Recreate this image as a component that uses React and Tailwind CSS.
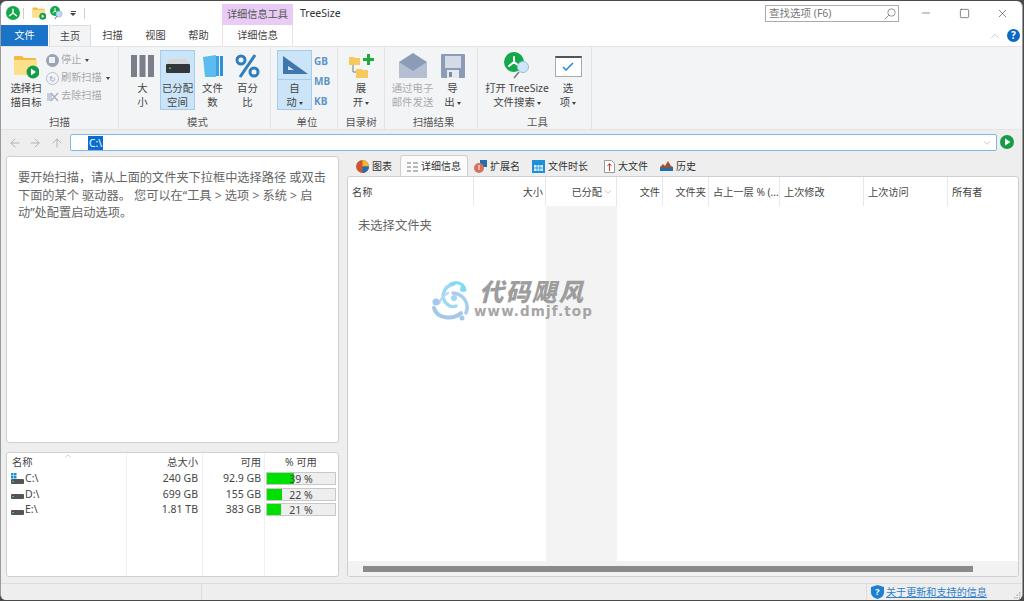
import { ArrowLeft, ArrowRight, ArrowUp, ChevronDown, ChevronUp, Minus, Square, X } from 'lucide-react'

function Logo({ size = 16 }) {
  return (
    <svg width={size} height={size} viewBox="0 0 20 20" className="shrink-0">
      <circle cx="10" cy="10" r="10" fill="#12a84b" />
      <path d="M10 4.5V10L5 14M10 10l5 4" fill="none" stroke="#fff" strokeWidth="2" strokeLinecap="round" />
    </svg>
  )
}

function PlayBadge({ size = 14 }) {
  return (
    <svg width={size} height={size} viewBox="0 0 14 14" className="shrink-0">
      <circle cx="7" cy="7" r="7" fill="#169c46" />
      <path d="M5 3.5v7L10.5 7z" fill="#fff" />
    </svg>
  )
}

function FolderPlay({ w = 26, h = 26 }) {
  return (
    <svg width={w} height={h} viewBox="0 0 26 26">
      <path d="M1 4a1 1 0 0 1 1-1h7l2 2h12v16H1z" fill="#f5b942" />
      <path d="M1 7h23v15H1z" fill="#fde08a" />
      <circle cx="20" cy="19" r="6.5" fill="#169c46" />
      <path d="M18 15.5v7l5-3.5z" fill="#fff" />
    </svg>
  )
}

function Caret() {
  return <span className="ml-[2px] inline-block align-middle w-0 h-0 border-x-[2.5px] border-x-transparent border-t-[3px] border-t-[#444]" />
}

function BigButton({ icon, lines, active, muted, caret, className = 'w-[35px]' }) {
  return (
    <div className={`${className} h-[60px] shrink-0 flex flex-col items-center border ${active ? 'bg-[#cce4f7] border-[#a3cdee]' : 'border-transparent'}`}>
      <div className="h-[31px] flex items-center justify-center">{icon}</div>
      <div className={`text-[10.4px] leading-[14px] text-center whitespace-nowrap ${muted ? 'text-[#aaaaaa]' : 'text-[#444]'}`}>
        {lines.map((l, i) => (
          <div key={i}>{l}{caret && i === lines.length - 1 && <Caret />}</div>
        ))}
      </div>
    </div>
  )
}

function Group({ label, className, children }) {
  return (
    <div className={`${className} h-full flex flex-col border-r border-[#e2e3e5] shrink-0`}>
      <div className="h-[60px] mt-[3px] flex">{children}</div>
      <div className="mt-[5px] h-[14px] leading-[14px] text-[10.4px] text-[#555] text-center">{label}</div>
    </div>
  )
}

function SmallAction({ icon, label, caret }) {
  return (
    <div className="h-[18px] flex items-center gap-[2px] text-[10.2px] text-[#aaaaaa] whitespace-nowrap">
      <span className="w-[14px] flex justify-center">{icon}</span>
      {label}
      {caret && <Caret />}
    </div>
  )
}

function Tab({ icon, label, active }) {
  return (
    <div className={`h-[21px] flex items-center gap-[3px] text-[10px] text-[#333] px-[6px] pt-px ${active ? 'bg-[#fbfbfb] border border-b-0 border-[#cfcfcf] rounded-t-[3px]' : ''}`}>
      {icon}
      <span>{label}</span>
    </div>
  )
}

const columns = [
  ['名称', 'w-[126px] pl-[4px] text-left'],
  ['大小', 'w-[72px] pr-[2px] text-right'],
  ['已分配', 'w-[71px] pr-[14px] text-right'],
  ['文件', 'w-[46px] pr-[2px] text-right'],
  ['文件夹', 'w-[46px] pr-[2px] text-right'],
  ['占上一层 % (...', 'w-[71px] pl-[4px] text-left'],
  ['上次修改', 'w-[84px] pl-[4px] text-left'],
  ['上次访问', 'w-[84px] pl-[4px] text-left'],
  ['所有者', 'flex-1 pl-[4px] text-left'],
]

const drives = [
  { name: 'C:\\', total: '240 GB', free: '92.9 GB', pct: 39, win: true },
  { name: 'D:\\', total: '699 GB', free: '155 GB', pct: 22 },
  { name: 'E:\\', total: '1.81 TB', free: '383 GB', pct: 21 },
]

function DriveIcon({ win }) {
  return (
    <svg width="13" height="12" viewBox="0 0 13 12" className="shrink-0">
      {win && <path d="M0 0h2.5v2.500H0zM3 0h2.500v2.500H3zM0 3h2.500v2.500H0zM3 3h2.500v2.500H3z" fill="#1c8fdc" />}
      <rect x="0" y="6" width="13" height="5" rx="1" fill="#555" />
      <rect x="1" y="8" width="2" height="1" fill="#4bd04b" />
    </svg>
  )
}

export default function App() {
  return (
    <div className="w-[1024px] h-[601px] bg-[#4a4a4a] overflow-hidden font-['Noto_Sans','Noto_Sans_CJK_SC',sans-serif]">
      <div className="w-[1023px] h-[599px] mt-[1px] bg-white rounded-[6px] border-l border-r border-[#9a9a9a] overflow-hidden flex flex-col">
        {/* title row */}
        <div className="h-[24px] flex shrink-0 relative">
          <div className="w-[221px] flex items-center pl-[5px] shrink-0">
            <Logo size={14} />
            <div className="w-px h-[11px] bg-[#ccc] ml-[3px]" />
            <div className="ml-[8px]"><FolderPlay w={14} h={14} /></div>
            <svg width="16" height="16" viewBox="0 0 16 16" className="ml-[3px]">
              <circle cx="6" cy="6" r="5" fill="#12a84b" />
              <path d="M6 3v3L3.500 8M6 6l2.500 2" fill="none" stroke="#fff" strokeWidth="1" />
              <circle cx="10" cy="9" r="3" fill="#bcdcf5" stroke="#8fb6d8" strokeWidth="0.7" />
              <path d="M8 11l-2 3" stroke="#777" strokeWidth="1" />
            </svg>
            <span className="ml-[5px] w-[6px] flex flex-col items-center gap-[1px]">
              <span className="block w-[5px] h-px bg-[#444]" />
              <span className="block w-0 h-0 border-x-[3px] border-x-transparent border-t-[3px] border-t-[#444]" />
            </span>
            <div className="w-px h-[11px] bg-[#ccc] ml-[8px]" />
          </div>
          <div className="mt-[3px] w-[71px] h-[21px] bg-[#e8ccf5] text-[10.2px] leading-[21px] text-center text-[#555] shrink-0">详细信息工具</div>
          <div className="ml-[7px] pt-[5px] text-[10.5px] leading-[14px] text-[#333]">TreeSize</div>
          <div className="ml-auto flex items-center pr-[13px]">
            <div className="w-[134px] h-[17px] mt-[1px] border border-[#aaa] flex items-center justify-between pl-[3px] pr-[2px] text-[10.5px] text-[#777]">
              查找选项 (F6)
              <svg width="12" height="12" viewBox="0 0 12 12" fill="none" stroke="#888" strokeWidth="0.9">
                <circle cx="7.500" cy="4.500" r="3.700" />
                <path d="M4.800 7.200L0.800 11.200" />
              </svg>
            </div>
            <Minus size={12} strokeWidth={1} className="ml-[21px] text-[#222]" />
            <Square size={11} strokeWidth={1.2} className="ml-[27px] text-[#222]" />
            <X size={13} strokeWidth={1} className="ml-[26px] text-[#222]" />
          </div>
        </div>

        {/* tab row */}
        <div className="h-[21px] flex items-stretch shrink-0 text-[10.2px] text-[#444] leading-[21px]">
          <div className="w-[47px] bg-[#1a73c6] text-white text-center">文件</div>
          <div className="w-[42px] ml-px bg-[#f3f4f6] border-x border-t border-[#dcdcdc] text-center">主页</div>
          <div className="ml-[11px] w-[21px] text-center">扫描</div>
          <div className="ml-[22px] w-[21px] text-center">视图</div>
          <div className="ml-[22px] w-[21px] text-center">帮助</div>
          <div className="ml-[13px] w-[71px] border-x border-[#e3e3e3] text-center">详细信息</div>
          <div className="ml-auto flex items-center gap-[5px] pr-[2px]">
            <ChevronUp size={14} strokeWidth={1} className="text-[#aaa]" />
            <span className="w-[13px] h-[13px] rounded-full bg-[#0b68c4] text-white text-[10px] leading-[13px] font-bold text-center">?</span>
          </div>
        </div>

        {/* ribbon */}
        <div className="h-[83px] shrink-0 bg-[#f3f4f6] border-t border-[#e4e4e4] flex">
          <Group label="扫描" className="w-[118px]">
            <BigButton
              className="ml-[7px] w-[36px]"
              icon={<FolderPlay />}
              lines={['选择扫', '描目标']}
            />
            <div className="ml-[1px] flex flex-col pt-px">
              <SmallAction label="停止" caret icon={<span className="w-[13px] h-[13px] rounded-full bg-[#9ca3b4] flex items-center justify-center"><span className="block w-[6px] h-[6px] bg-[#eef0f4]" /></span>} />
              <SmallAction label="刷新扫描" caret icon={<span className="w-[13px] h-[13px] rounded-full border border-[#b5bfce] text-[8px] leading-[11px] text-center text-[#8fa3c0]">↻</span>} />
              <SmallAction label="去除扫描" icon={
                <svg width="13" height="13" viewBox="0 0 13 13"><path d="M1 3h5v8H1z" fill="#c4cede" /><path d="M5 3l7 8M12 3l-7 8" stroke="#a8adb8" strokeWidth="1.2" /></svg>
              } />
            </div>
          </Group>

          <Group label="模式" className="w-[152px] pl-[6px]">
            <BigButton
              lines={['大', '小']}
              icon={
                <svg width="23" height="22" viewBox="0 0 23 22">
                  <rect x="0" y="0" width="6" height="22" fill="#7b7f8a" />
                  <rect x="8.500" y="0" width="6" height="22" fill="#7b7f8a" />
                  <rect x="17" y="0" width="6" height="22" fill="#7b7f8a" />
                </svg>
              }
            />
            <BigButton
              active
              lines={['已分配', '空间']}
              icon={
                <svg width="24" height="14" viewBox="0 0 24 14">
                  <path d="M4 0h16l4 5H0z" fill="#d5d7da" />
                  <rect x="0" y="5" width="24" height="9" rx="1" fill="#33363a" />
                  <rect x="3" y="8.500" width="2" height="1.500" fill="#35d04a" />
                </svg>
              }
            />
            <BigButton
              lines={['文件', '数']}
              icon={
                <svg width="20" height="22" viewBox="0 0 20 22">
                  <path d="M0 2l13-2v22H2z" fill="#5bbcf0" />
                  <rect x="13" y="1" width="3" height="20" fill="#3f9fe2" />
                  <rect x="17" y="1" width="3" height="20" fill="#2f8fd8" />
                </svg>
              }
            />
            <BigButton
              lines={['百分', '比']}
              icon={
                <svg width="25" height="24" viewBox="0 0 25 24" fill="none" stroke="#2f7ebd" strokeWidth="3">
                  <circle cx="6" cy="6" r="4" />
                  <circle cx="19" cy="18" r="4" />
                  <path d="M20 1L5 23" />
                </svg>
              }
            />
          </Group>

          <Group label="单位" className="w-[67px] pl-[6px]">
            <div className="w-[35px] h-[60px] bg-[#cce4f7] border border-[#a3cdee] flex flex-col items-center shrink-0">
              <div className="h-[29px] w-full flex items-center justify-center border-b border-[#a3cdee]">
                <svg width="26" height="18" viewBox="0 0 26 18">
                  <path d="M1 0l25 18H1zM6 10v4h6z" fill="#3f76ad" fillRule="evenodd" />
                </svg>
              </div>
              <div className="text-[10.4px] leading-[14px] text-center text-[#444] pt-[1px]">
                <div>自</div>
                <div>动<Caret /></div>
              </div>
            </div>
            <div className="ml-[2px] flex flex-col pt-[1px] text-[10px] leading-[20px] font-bold text-[#5b94c9]">
              <span>GB</span>
              <span>MB</span>
              <span>KB</span>
            </div>
          </Group>

          <Group label="目录树" className="w-[47px]">
            <BigButton
              className="w-full"
              caret
              lines={['展', '开']}
              icon={
                <svg width="26" height="25" viewBox="0 0 26 25">
                  <path d="M1 3h5l1 1h5v7H1z" fill="#f6c95c" />
                  <path d="M5 11v7h3" fill="none" stroke="#777" strokeWidth="1" />
                  <path d="M8 15h6l1 1h5v8H8z" fill="#f6c95c" />
                  <path d="M15 4h4V0h3v4h4v3h-4v4h-3V7h-4z" fill="#22a83d" />
                </svg>
              }
            />
          </Group>

          <Group label="扫描结果" className="w-[93px] pl-[5px]">
            <BigButton
              className="w-[45px]"
              muted
              lines={['通过电子', '邮件发送']}
              icon={
                <svg width="28" height="26" viewBox="0 0 28 26">
                  <path d="M0 9L14 0l14 9v16H0z" fill="#8d9cb6" />
                  <path d="M0 9l14 9 14-9v16H0z" fill="#b4bfd2" />
                </svg>
              }
            />
            <BigButton
              className="w-[35px]"
              caret
              lines={['导', '出']}
              icon={
                <svg width="24" height="24" viewBox="0 0 24 24">
                  <rect width="24" height="24" rx="1" fill="#8d9cb6" />
                  <rect x="4" y="2" width="16" height="12" fill="#d5dbe6" />
                  <rect x="6" y="16" width="12" height="8" fill="#e4e8ef" />
                  <rect x="8" y="18" width="3" height="5" fill="#7d8ca8" />
                </svg>
              }
            />
          </Group>

          <Group label="工具" className="w-[114px] pl-[6px]">
            <BigButton
              className="w-[66px]"
              caret
              lines={['打开 TreeSize', '文件搜索']}
              icon={
                <svg width="28" height="28" viewBox="0 0 28 28">
                  <circle cx="11" cy="10" r="10" fill="#12a84b" />
                  <path d="M11 5v5L6 14M11 10l5 4" fill="none" stroke="#fff" strokeWidth="2" strokeLinecap="round" />
                  <circle cx="20" cy="15" r="5.500" fill="#cfe6f8" stroke="#97bedd" />
                  <path d="M16 20l-5 6" stroke="#777" strokeWidth="1.500" />
                </svg>
              }
            />
            <BigButton
              className="w-[36px]"
              caret
              lines={['选', '项']}
              icon={
                <span className="w-[27px] h-[21px] bg-white border border-[#a9a9a9] border-t-2 border-t-[#555] flex items-center justify-center">
                  <svg width="12" height="9" viewBox="0 0 12 9"><path d="M1 5l3 3 7-7" fill="none" stroke="#1e88e5" strokeWidth="1.500" /></svg>
                </span>
              }
            />
          </Group>
        </div>

        {/* address bar */}
        <div className="h-[26px] shrink-0 bg-[#eeeeee] border-t border-[#e4e4e4] flex items-start pt-[4px] text-[#aaa]">
          <ArrowLeft size={14} strokeWidth={1.5} className="ml-[7px] mt-[2px]" />
          <ArrowRight size={14} strokeWidth={1.5} className="ml-[6px] mt-[2px]" />
          <ArrowUp size={14} strokeWidth={1.5} className="ml-[8px] mt-[2px]" />
          <div className="ml-[6px] w-[927px] h-[17px] bg-white border border-[#7db8e8] rounded-[2px] flex items-center pl-[17px] pr-[4px]">
            <span className="bg-[#0a6ccf] text-white text-[10.2px] leading-[14px] px-px">C:\</span>
            <ChevronDown size={10} strokeWidth={1} className="ml-auto text-[#777]" />
          </div>
          <div className="ml-[3px] mt-[1px]"><PlayBadge /></div>
        </div>

        {/* main */}
        <div className="flex-1 min-h-0 bg-[#eeeeee] flex pl-[5px] pr-[3px]">
          <div className="w-[333px] flex flex-col shrink-0 pt-[1px] pb-[6px]">
            <div className="h-[287px] bg-white border border-[#cfcfcf] rounded-[3px] pl-[11px] pr-[9px] pt-[12px] text-[12.2px] leading-[17.500px] text-[#666]">
              要开始扫描，请从上面的文件夹下拉框中选择路径 或双击下面的某个 驱动器。 您可以在“工具 &gt; 选项 &gt; 系统 &gt; 启动”处配置启动选项。
            </div>
            <div className="mt-[9px] flex-1 bg-white border border-[#cfcfcf] rounded-[3px] relative text-[10.3px] text-[#444]">
              <ChevronUp size={10} strokeWidth={1} className="absolute left-[56px] top-[-2px] text-[#888]" />
              <div className="h-full flex">
                <div className="w-[120px] border-r border-[#eef0f2] pl-[4px]">
                  <div className="h-[18px] leading-[19px] pl-px">名称</div>
                  {drives.map(d => (
                    <div key={d.name} className="h-[15.500px] flex items-center gap-[1px] leading-[15px] text-[10.5px]">
                      <DriveIcon win={d.win} />
                      {d.name}
                    </div>
                  ))}
                </div>
                <div className="w-[76px] border-r border-[#eef0f2] text-right pr-[4px]">
                  <div className="h-[18px] leading-[19px]">总大小</div>
                  {drives.map(d => <div key={d.name} className="h-[15.500px] leading-[15px] text-[10.5px]">{d.total}</div>)}
                </div>
                <div className="w-[62px] border-r border-[#eef0f2] text-right pr-[3px]">
                  <div className="h-[18px] leading-[19px]">可用</div>
                  {drives.map(d => <div key={d.name} className="h-[15.500px] leading-[15px] text-[10.5px]">{d.free}</div>)}
                </div>
                <div className="flex-1 pl-[1px] pr-[2px]">
                  <div className="h-[18px] leading-[19px] text-center">% 可用</div>
                  {drives.map(d => (
                    <div key={d.name} className="h-[15.500px] flex items-center">
                      <div className="relative w-full h-[13px] bg-[#eeeeee] border border-[#c8c8c8] text-center text-[10.5px] leading-[12px]">
                        <div className="absolute left-0 top-0 bottom-0 bg-[#00e000]" style={{ width: `${d.pct}%` }} />
                        <span className="relative">{d.pct} %</span>
                      </div>
                    </div>
                  ))}
                </div>
              </div>
            </div>
          </div>

          <div className="ml-[8px] flex-1 flex flex-col pb-[6px] min-w-0">
            <div className="h-[21px] shrink-0 flex items-end pl-[3px]">
              <Tab label="图表" icon={
                <svg width="13" height="13" viewBox="0 0 13 13">
                  <circle cx="6.500" cy="6.500" r="6.500" fill="#c9582f" />
                  <path d="M6.500 6.500V0A6.500 6.500 0 0 1 13 6.500z" fill="#f2b632" />
                  <path d="M6.500 6.500H13A6.500 6.500 0 0 1 6.500 13z" fill="#1f6fb0" />
                </svg>
              } />
              <div className="w-[2px]" />
              <Tab active label="详细信息" icon={
                <svg width="11" height="10" viewBox="0 0 11 10" stroke="#777" strokeWidth="1">
                  <path d="M0 1h4M6 1h5M0 5h4M6 5h5M0 9h4M6 9h5" />
                </svg>
              } />
              <Tab label="扩展名" icon={
                <svg width="13" height="13" viewBox="0 0 13 13">
                  <rect x="6" y="0" width="7" height="7" fill="#1f6fb0" />
                  <circle cx="5" cy="8" r="5" fill="#d9705b" />
                  <path d="M5 5v5" stroke="#fff" strokeWidth="1" />
                </svg>
              } />
              <Tab label="文件时长" icon={
                <svg width="13" height="13" viewBox="0 0 13 13">
                  <rect width="13" height="13" fill="#1f8fd8" />
                  <path d="M2 5h9v6H2z" fill="#d5ecfb" />
                  <path d="M5 5v6M8 5v6M2 8h9" stroke="#1f8fd8" strokeWidth="0.800" />
                </svg>
              } />
              <div className="w-[4px]" />
              <Tab label="大文件" icon={
                <svg width="11" height="13" viewBox="0 0 11 13">
                  <path d="M0.500 0.500h7l3 3v9h-10z" fill="#fff" stroke="#999" />
                  <path d="M5.500 11V4M3.500 6l2-2.500 2 2.500" fill="none" stroke="#d13b2a" strokeWidth="1" />
                </svg>
              } />
              <Tab label="历史" icon={
                <svg width="13" height="10" viewBox="0 0 13 10">
                  <path d="M0 10V6l3-3 2 2 3-5 3 5 2 1v4z" fill="#a4522d" />
                  <path d="M0 10V7l3-1 3 2 3-2 4 1v3z" fill="#1f6fb0" />
                </svg>
              } />
            </div>

            <div className="flex-1 min-h-0 bg-white border border-[#cfcfcf] rounded-[3px] flex flex-col overflow-hidden relative">
              <div className="h-[29px] shrink-0 flex text-[10.2px] leading-[30px] text-[#444]">
                {columns.map(([name, cls]) => (
                  <div key={name} className={`${cls} h-full whitespace-nowrap border-r border-[#e8e8e8] last:border-r-0 relative overflow-hidden`}>
                    {name}
                    {name === '已分配' && <ChevronDown size={10} strokeWidth={1} className="absolute right-[3px] top-[10px] text-[#777]" />}
                  </div>
                ))}
              </div>
              <div className="flex-1 min-h-0 flex">
                <div className="w-[198px] shrink-0 pl-[10px] pt-[11px] text-[12.3px] leading-[18px] text-[#666]">未选择文件夹</div>
                <div className="w-[71px] shrink-0 bg-[#f3f3f3]" />
              </div>
              <div className="h-[15px] shrink-0 bg-[#f2f2f2] flex items-center pl-[15px]">
                <div className="w-[610px] h-[6px] bg-[#8a8a8a]" />
              </div>

              {/* watermark */}
              <div className="absolute left-[84px] top-[104px] w-[162px] h-[44px]">
                <svg width="42" height="40" viewBox="0 0 42 40" className="absolute left-0 top-0" fill="none" strokeLinecap="round">
                  <path d="M22 3C11 5 8 17 15 23c3 3 7 3 9 2" stroke="#9fd8f5" strokeWidth="3.500" />
                  <path d="M19 3c7-3 13 0 14 6" stroke="#7fdcf7" strokeWidth="3" />
                  <path d="M21 12c10 1 17 10 13 20" stroke="#a9cdec" strokeWidth="3.500" />
                  <path d="M2 27c3 11 19 12 27 5" stroke="#a3c8ea" strokeWidth="4" />
                  <path d="M7 22c2-5 5-8 9-10" stroke="#b8d9f2" strokeWidth="2.500" />
                  <circle cx="4" cy="21" r="3.500" fill="#a3c8ea" />
                  <circle cx="30" cy="37" r="2.500" fill="#a3c8ea" />
                  <circle cx="22" cy="17" r="3" fill="#9fd8f5" />
                  <circle cx="31" cy="8" r="3" fill="#7fdcf7" />
                </svg>
                <div className="absolute left-[47px] top-[0px] whitespace-nowrap text-[24.500px] leading-[22px] font-black italic tracking-[2px] text-[#9d9d9d]">代码飓风</div>
                <div className="absolute left-[42px] top-[22px] whitespace-nowrap text-[13.500px] leading-[16px] font-bold tracking-[1.100px] text-[#a5a5a5] font-['DejaVu_Sans',sans-serif]">www.dmjf.top</div>
              </div>
            </div>
          </div>
        </div>

        {/* status bar */}
        <div className="h-[17px] shrink-0 bg-[#eeeeee] border-t border-[#dcdcdc] flex items-center text-[10.1px] relative">
          <div className="w-[201px] h-full border-r border-[#dcdcdc]" />
          <div className="w-[665px] h-full border-r border-[#dcdcdc]" />
          <svg width="13" height="14" viewBox="0 0 13 14" className="ml-[4px]">
            <path d="M6.500 0L13 2v5c0 4-3 6-6.500 7C3 13 0 11 0 7V2z" fill="#1f7fd0" />
            <text x="6.500" y="10" textAnchor="middle" fontSize="9" fontWeight="700" fill="#fff">?</text>
          </svg>
          <span className="ml-[2px] text-[#2f80cc] underline leading-[14px]">关于更新和支持的信息</span>
          <svg width="7" height="7" viewBox="0 0 7 7" fill="#b5b5b5" className="absolute right-[1px] bottom-[1px]">
            <rect x="5" y="0" width="1.500" height="1.500" />
            <rect x="2.500" y="2.500" width="1.500" height="1.500" />
            <rect x="5" y="2.500" width="1.500" height="1.500" />
            <rect x="0" y="5" width="1.500" height="1.500" />
            <rect x="2.500" y="5" width="1.500" height="1.500" />
            <rect x="5" y="5" width="1.500" height="1.500" />
          </svg>
        </div>
      </div>
    </div>
  )
}
